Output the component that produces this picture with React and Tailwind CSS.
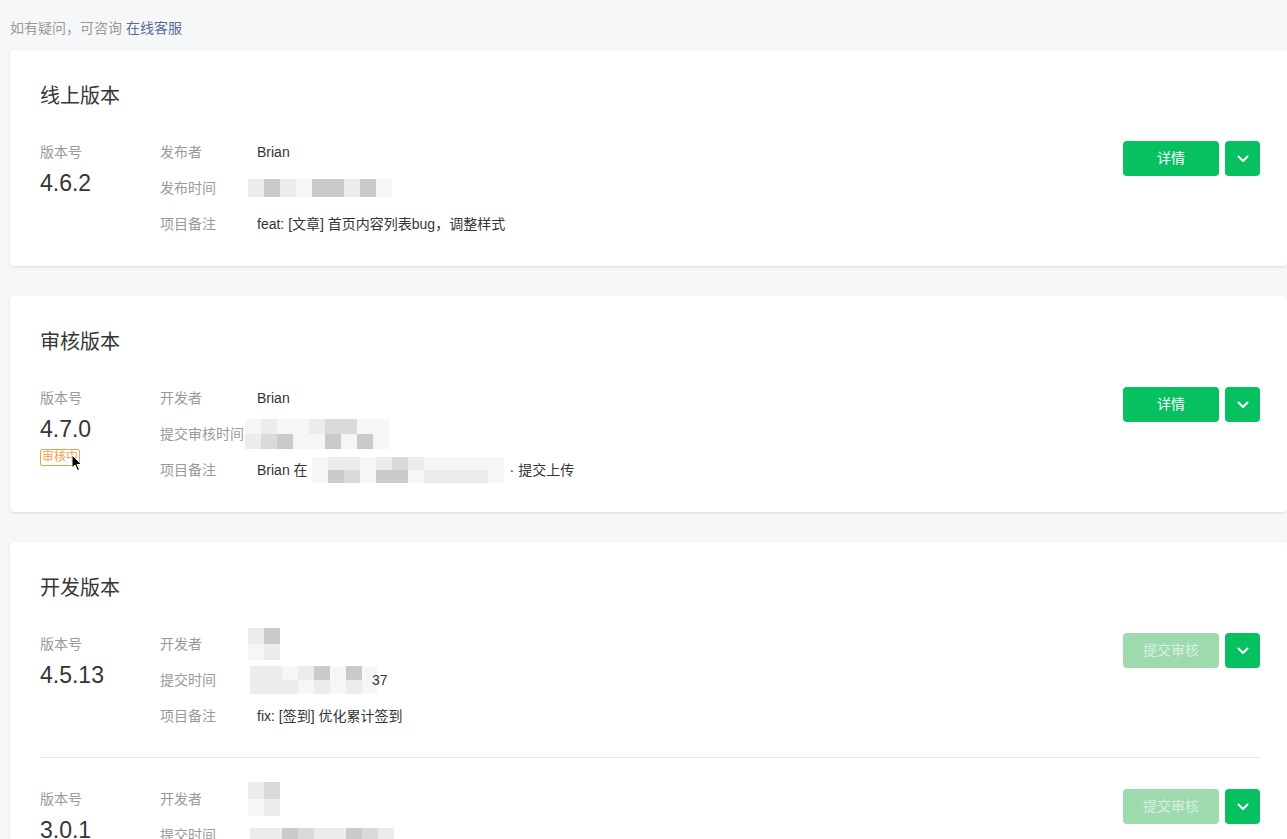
import React from 'react'

const font = { fontFamily: '"Liberation Sans", "Noto Sans CJK SC", sans-serif' }

// pixelated blur blocks standing in for hidden values
const Mosaic = ({ rows, cell = 16, h = 16, className = '' }) => (
  <div className={`flex flex-col ${className}`}>
    {rows.map((row, i) => (
      <div key={i} className="flex">
        {row.map((c, j) => (
          <div key={j} style={{ width: cell, height: h, background: c }} />
        ))}
      </div>
    ))}
  </div>
)

const Chevron = () => (
  <svg width="12" height="8" viewBox="0 0 12 8" fill="none">
    <polyline points="1.5,1.5 6,6 10.5,1.5" stroke="white" strokeWidth="2" strokeLinecap="round" strokeLinejoin="round" />
  </svg>
)

const Actions = ({ label, disabled, top = 'mt-[7px]' }) => (
  <div className={`flex gap-[6px] self-start ${top}`}>
    <button
      className={`w-[96px] h-[35px] rounded-[4px] text-[14px] ${
        disabled ? 'bg-[#9ddbae] text-white/60' : 'bg-[#07c160] text-white'
      }`}
    >
      {label}
    </button>
    <button className="w-[35px] h-[35px] rounded-[4px] bg-[#07c160] flex items-center justify-center">
      <Chevron />
    </button>
  </div>
)

const Row = ({ label, children }) => (
  <div className="flex items-center h-[36px]">
    <div className="w-[97px] text-[14px] text-[#9a9a9a]">{label}</div>
    <div className="flex items-center text-[14px] text-[#353535]">{children}</div>
  </div>
)

const Version = ({ version, badge, rows, action, disabled, btnTop }) => (
  <div className="flex">
    <div className="w-[120px] flex flex-col">
      <div className="h-[36px] flex items-center text-[14px] text-[#9a9a9a]">版本号</div>
      <div className="text-[23px] leading-[26px] text-[#353535]">{version}</div>
      {badge && (
        <div className="relative mt-[7px] self-start">
          <span className="block h-[17px] leading-[15px] px-[1px] border border-[#f0a050] rounded-[2px] text-[12px] text-[#f0a050]">
            {badge}
          </span>
          <svg className="absolute left-[31px] top-[5px]" width="12" height="18" viewBox="0 0 12 18">
            <path d="M1 1 L1 14 L4 11 L6.5 16.5 L8.5 15.5 L6 10.5 L10.5 10.5 Z" fill="black" stroke="white" strokeWidth="1" />
          </svg>
        </div>
      )}
    </div>
    <div className="flex-1 flex flex-col">
      {rows.map((r) => (
        <Row key={r[0]} label={r[0]}>
          {r[1]}
        </Row>
      ))}
    </div>
    <Actions label={action} disabled={disabled} top={btnTop} />
  </div>
)

const Card = ({ title, children }) => (
  <div className="bg-white rounded-[4px] shadow-[0_1px_3px_rgba(0,0,0,0.12)] pl-[30px] pr-[27px] pt-[32px] pb-[24px]">
    <h2 className="text-[20px] leading-[28px] text-[#353535] mb-[24px]">{title}</h2>
    {children}
  </div>
)

const L = '#ececec'
const M = '#dadada'
const D = '#cacaca'
const W = '#f6f6f6'

export default function App() {
  return (
    <div style={font} className="min-h-screen bg-[#f6f7f9] pt-[18px] pl-[10px] overflow-hidden">
      <p className="text-[14px] leading-[20px] text-[#9a9a9a]">
        如有疑问，可咨询 <a className="text-[#576b95]">在线客服</a>
      </p>
      <div className="mt-[12px] flex flex-col gap-[30px]">
        <Card title="线上版本">
          <Version
            version="4.6.2"
            action="详情"
            rows={[
              ['发布者', 'Brian'],
              ['发布时间', <Mosaic key="m" className="-ml-[9px]" h={18} rows={[[L, D, L, W, D, D, L, D, W]]} />],
              ['项目备注', 'feat: [文章] 首页内容列表bug，调整样式'],
            ]}
          />
        </Card>
        <Card title="审核版本">
          <Version
            version="4.7.0"
            badge="审核中"
            action="详情"
            rows={[
              ['开发者', 'Brian'],
              [
                '提交审核时间',
                <Mosaic
                  key="m"
                  className="-ml-[12px]"
                  h={15}
                  rows={[
                    [W, L, W, W, L, M, M, W, W],
                    [L, M, D, W, W, D, W, D, W],
                  ]}
                />,
              ],
              [
                '项目备注',
                <>
                  <span>Brian 在</span>
                  <Mosaic key="m" className="ml-[4px]" h={13} rows={[[W, L, L, W, L, M, L, W, W, W, W, W], [W, D, M, W, D, D, W, L, L, L, L, W]]} />
                  <span className="ml-[6px]">· 提交上传</span>
                </>,
              ],
            ]}
          />
        </Card>
        <Card title="开发版本">
          <Version
            version="4.5.13"
            action="提交审核"
            disabled
            rows={[
              ['开发者', <Mosaic key="m" className="-ml-[9px]" h={16} rows={[[L, D], [W, L]]} />],
              [
                '提交时间',
                <>
                  <Mosaic key="m" className="-ml-[7px]" h={14} rows={[[L, L, W, L, D, W, D, W], [L, L, L, W, L, W, L, W]]} />
                  <span className="-ml-[6px]">37</span>
                </>,
              ],
              ['项目备注', 'fix: [签到] 优化累计签到'],
            ]}
          />
          <div className="border-t border-[#e5e5e5] mt-[23px] pt-[23px]">
            <Version
              version="3.0.1"
              action="提交审核"
              disabled
              btnTop="mt-[8px]"
              rows={[
                ['开发者', <Mosaic key="m" className="-ml-[9px]" h={17} rows={[[L, M], [W, L]]} />],
                ['提交时间', <Mosaic key="m" className="-ml-[7px]" h={14} rows={[[L, L, D, M, L, L, D, M, L]]} />],
                ['项目备注', 'feat: 调整样式'],
              ]}
            />
          </div>
        </Card>
      </div>
    </div>
  )
}
